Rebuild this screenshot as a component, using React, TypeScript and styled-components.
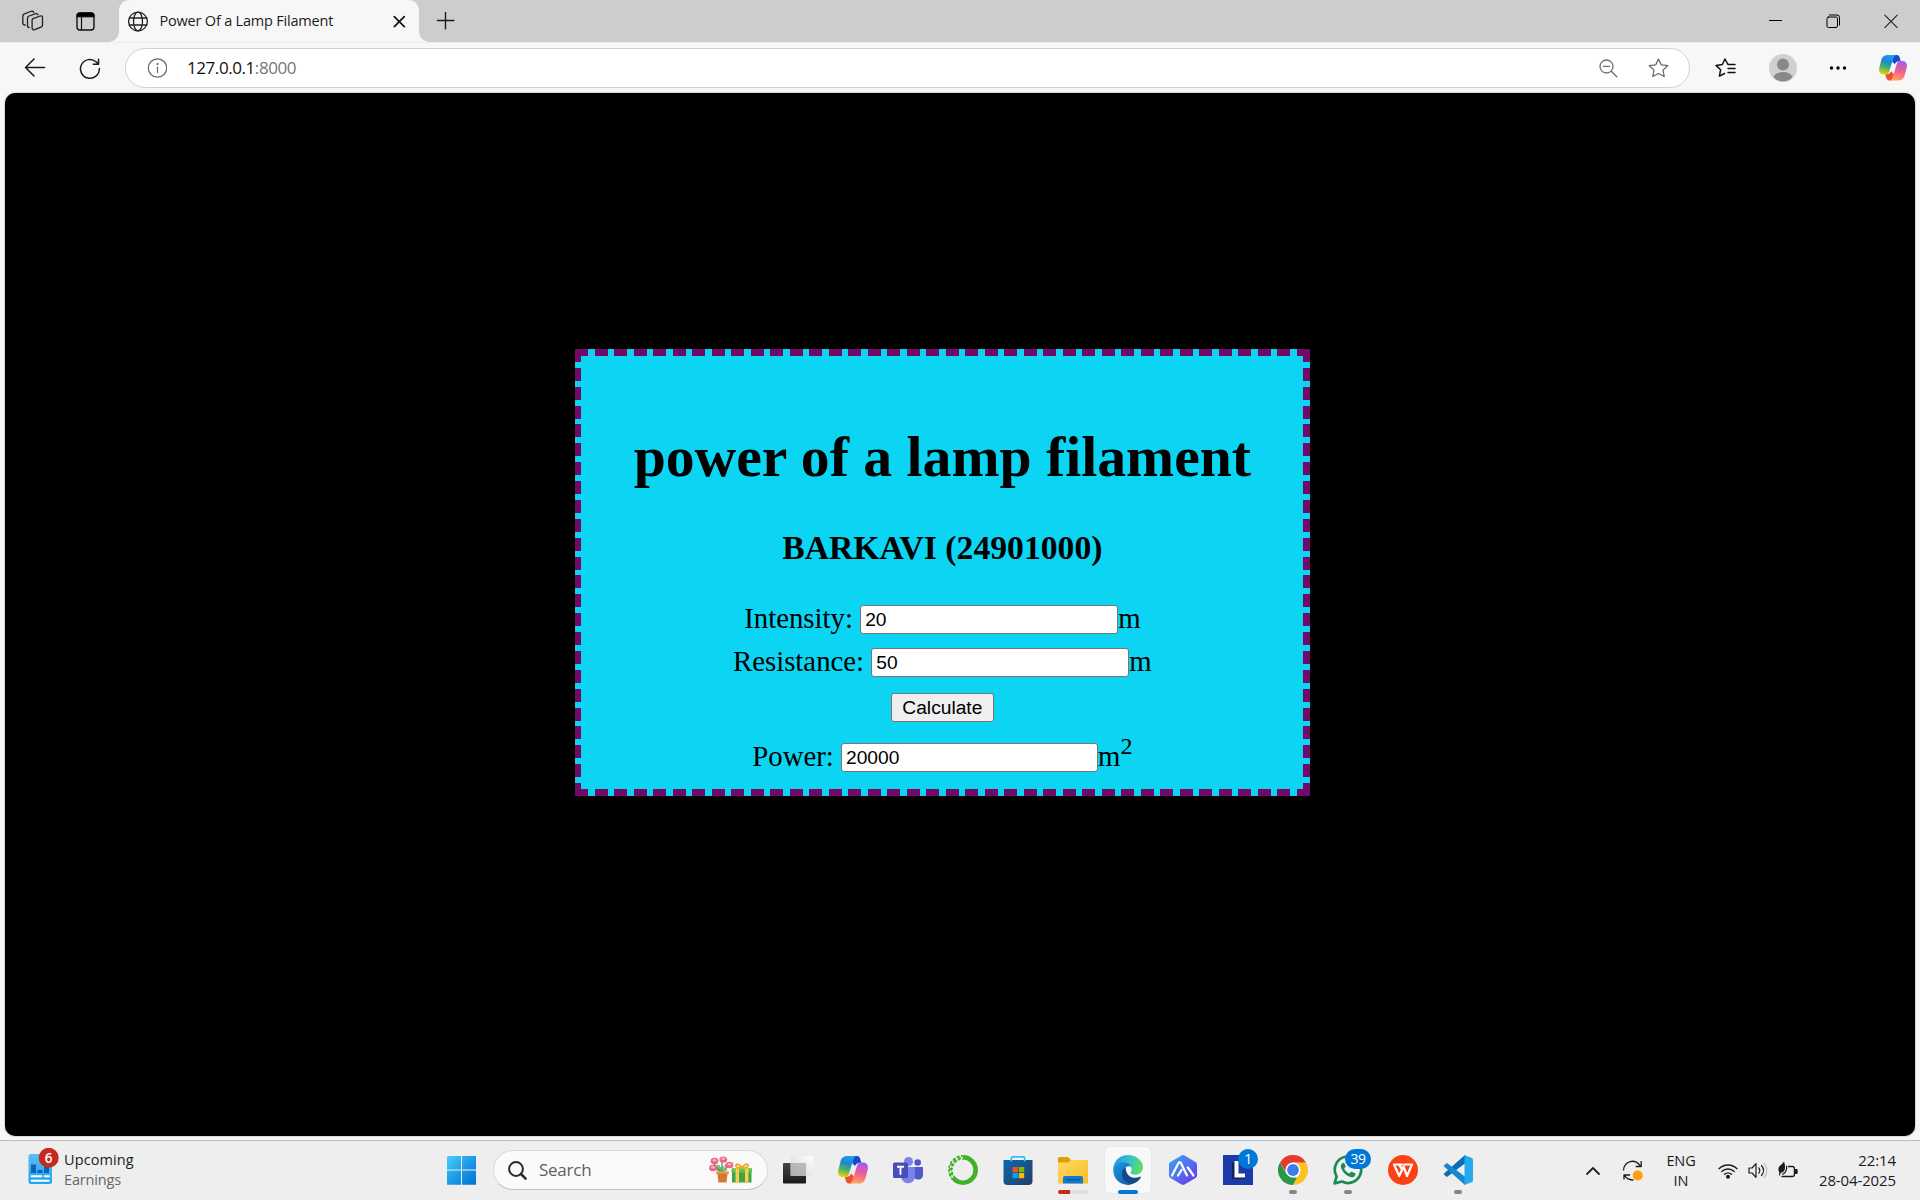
import React from "react";
import styled, { createGlobalStyle, css } from "styled-components";

const UI_FONT = '"Open Sans", "Noto Sans", sans-serif';

const GlobalStyle = createGlobalStyle`
  * { box-sizing: border-box; }
  html, body { margin: 0; padding: 0; }
  body { width: 1920px; height: 1200px; overflow: hidden; background: #f7f7f7; }
  svg { display: block; flex: none; }
`;

const Screen = styled.div`
  width: 1920px;
  height: 1200px;
  display: flex;
  flex-direction: column;
  background: #f7f7f7;
  font-family: ${UI_FONT};
`;

/* ---------- browser chrome ---------- */

const TabStrip = styled.header`
  height: 42px;
  flex: none;
  display: flex;
  align-items: stretch;
  background: #cdcdcd;
`;

const StripTools = styled.div`
  width: 119px;
  display: flex;
  align-items: center;
  padding: 0 0 0 22px;
  gap: 32px;
`;

const Tab = styled.div`
  position: relative;
  width: 300px;
  height: 42px;
  display: flex;
  align-items: center;
  padding: 0 12px 0 9px;
  background: #f7f7f7;
  border-radius: 10px 10px 0 0;
  &::before,
  &::after {
    content: "";
    position: absolute;
    bottom: 0;
    width: 10px;
    height: 10px;
  }
  &::before {
    left: -10px;
    background: radial-gradient(circle at 0 0, transparent 9.5px, #f7f7f7 10px);
  }
  &::after {
    right: -10px;
    background: radial-gradient(circle at 100% 0, transparent 9.5px, #f7f7f7 10px);
  }
`;

const TabTitle = styled.span`
  flex: 1;
  margin-left: 10.5px;
  font-size: 14.5px;
  letter-spacing: -0.2px;
  line-height: 20px;
  color: #1b1b1b;
  white-space: nowrap;
`;

const NewTab = styled.div`
  display: flex;
  align-items: center;
  padding-left: 18px;
`;

const WindowButtons = styled.div`
  margin-left: auto;
  display: flex;
`;

const WindowButton = styled.div`
  width: 58px;
  display: flex;
  align-items: center;
  justify-content: center;
`;

const Toolbar = styled.div`
  height: 51px;
  flex: none;
  display: flex;
  align-items: center;
  padding: 1px 0 0 24px;
  border-top: 1px solid #ececec;
  background: #f7f7f7;
`;

const NavButtons = styled.div`
  width: 101px;
  display: flex;
  gap: 33px;
`;

const AddressBar = styled.div`
  width: 1565px;
  height: 40px;
  margin-top: -1px;
  display: flex;
  align-items: center;
  padding: 0 20px 0 21px;
  border: 1px solid #d0d0d0;
  border-radius: 20px;
  background: #fff;
`;

const Url = styled.span`
  flex: 1;
  margin-left: 20px;
  font-size: 17px;
  line-height: 24px;
  letter-spacing: -0.43px;
  color: #111;
  span { color: #767676; }
`;

const BarIcons = styled.div`
  display: flex;
  align-items: center;
  gap: 30px;
`;

const ToolIcons = styled.div`
  display: flex;
  align-items: center;
  margin: -1px 0 0 25px;
  gap: 32px;
`;

/* ---------- page ---------- */

const Page = styled.main`
  height: 1043px;
  flex: none;
  margin: 0 5px;
  padding: 256px 0 0 570px;
  border-radius: 10px;
  background: #000;
  box-shadow: 0 0 2px rgba(0, 0, 0, 0.4);
`;

const dash = (dir: string, period: number) =>
  `repeating-linear-gradient(${dir}, #700a66 0 13px, transparent 13px ${period}px)`;

const Card = styled.section`
  width: 734.7px;
  height: 447px;
  display: flex;
  flex-direction: column;
  align-items: center;
  padding-top: 75px;
  font-family: "Liberation Serif", "Times New Roman", serif;
  font-size: 28.8px;
  color: #000;
  background:
    ${dash("to right", 19.505)} 0 0 / 100% 7px no-repeat,
    ${dash("to right", 19.505)} 0 100% / 100% 7px no-repeat,
    ${dash("to bottom", 18.87)} 0 0 / 6.3px 100% no-repeat,
    ${dash("to bottom", 18.87)} 100% 0 / 7px 100% no-repeat,
    #0bd5f2;
`;

const Title = styled.h1`
  margin: 0;
  font-size: 57.7px;
  line-height: 66px;
  white-space: nowrap;
`;

const Author = styled.h3`
  margin: 39px 0 34px;
  font-size: 33.7px;
  line-height: 38px;
`;

const Field = styled.label`
  height: 34px;
  display: flex;
  align-items: center;
  margin-bottom: 9px;
  line-height: 34px;
  white-space: pre;
`;

const ResultField = styled(Field)`
  margin: 17px 0 0;
`;

const control = css`
  font-family: "Liberation Sans", Arial, sans-serif;
  font-size: 19.2px;
  color: #000;
  border: 1px solid #767676;
  border-radius: 3px;
`;

const Input = styled.input<{ $w?: number }>`
  ${control}
  width: ${(p) => p.$w ?? 258}px;
  height: 29px;
  margin: 3px 0 0;
  padding: 2px 4px 1px;
  background: #fff;
  outline: none;
`;

const Calculate = styled.button`
  ${control}
  width: 102.5px;
  height: 29px;
  margin: 6px 0 0;
  padding: 1px 0 0;
  background: #efefef;
`;

const Sup = styled.sup`
  font-size: 24px;
  line-height: 24px;
  align-self: flex-start;
  margin-top: -5px;
`;

/* ---------- taskbar ---------- */

const Taskbar = styled.footer`
  height: 60px;
  margin-top: 4px;
  flex: none;
  display: flex;
  align-items: flex-start;
  border-top: 1px solid #bdbdbd;
  background: #eeeeee;
`;

const Launcher = styled.nav`
  height: 58px;
  display: flex;
  align-items: center;
`;

const Widget = styled.div`
  width: 447px;
  height: 59px;
  display: flex;
  padding: 7px 0 0 28px;
`;

const WidgetIcon = styled.div`
  width: 36px;
`;

const TwoLines = styled.div<{ $align?: string }>`
  font-size: 14.5px;
  line-height: 20px;
  letter-spacing: -0.1px;
  text-align: ${(p) => p.$align ?? "left"};
  color: #1c1c1c;
`;

const Muted = styled.div`
  color: #666;
  letter-spacing: -0.15px;
`;

const WidgetText = styled(TwoLines)`
  padding-top: 2px;
  letter-spacing: 0.1px;
`;

const SearchBox = styled.div`
  width: 275px;
  height: 40px;
  margin: 0 2px 0 16px;
  display: flex;
  align-items: center;
  padding: 0 14px;
  border: 1px solid #dadada;
  border-bottom-color: #c2c2c2;
  border-radius: 20px;
  background: #fafafa;
`;

const SearchText = styled.span`
  flex: 1;
  margin-left: 12px;
  font-size: 17px;
  letter-spacing: -0.25px;
  line-height: 24px;
  color: #5f5f5f;
`;

const AppSlot = styled.div`
  position: relative;
  width: 55px;
  height: 58px;
  display: flex;
  align-items: center;
  justify-content: center;
`;

const ActiveTile = styled.div`
  width: 48px;
  height: 48px;
  display: flex;
  align-items: center;
  justify-content: center;
  border: 1px solid #e5e5e5;
  border-radius: 6px;
  background: #f8f8f8;
`;

const Indicator = styled.i<{ $w: number; $color: string; $track?: boolean }>`
  position: absolute;
  bottom: 5px;
  left: 50%;
  width: ${(p) => p.$w}px;
  height: 4px;
  margin-left: ${(p) => -p.$w / 2}px;
  border-radius: 2px;
  background: ${(p) =>
    p.$track ? `linear-gradient(to right, ${p.$color} 12px, #dedede 12px)` : p.$color};
`;

const Badge = styled.b<{ $w: number }>`
  position: absolute;
  top: 8px;
  right: ${(p) => (p.$w > 22 ? 4 : 7)}px;
  width: ${(p) => p.$w}px;
  height: 20px;
  border-radius: 10px;
  background: #0078d7;
  color: #fff;
  font-size: 14px;
  font-weight: 400;
  line-height: 20px;
  letter-spacing: -0.5px;
  text-align: center;
`;

const Tray = styled.div`
  height: 59px;
  margin-left: auto;
  padding-right: 24px;
  display: flex;
  align-items: center;
`;

const TraySlot = styled.div<{ $w: number }>`
  width: ${(p) => p.$w}px;
  display: flex;
  justify-content: center;
`;

const Language = styled(TwoLines)`
  width: 56px;
  margin-right: 4px;
`;

const Clock = styled(TwoLines)`
  width: 93px;
  margin-top: -2px;
  font-size: 15px;
  letter-spacing: -0.12px;
`;

/* ---------- drawings ---------- */

const line = (w = 1.3, color = "#1b1b1b") => ({
  fill: "none",
  stroke: color,
  strokeWidth: w,
  strokeLinecap: "round" as const,
  strokeLinejoin: "round" as const,
});

const Workspaces = () => (
  <svg width="22" height="22" viewBox="0 0 22 22" {...line(1.3, "#222")}>
    <path d="M10.500 8.800l7.700-2.800c1.300-.4 2.300.2 2.300 1.500v7.600c0 1-.5 1.700-1.500 2.100l-6.300 2.500c-1.400.5-2.600-.1-2.600-1.600v-7.700c0-.8.100-1.300.4-1.600z" />
    <path d="M7.200 17.500c-1.100 0-1.700-.6-1.700-1.700V8.300c0-1.200.5-1.900 1.600-2.300l5.800-2.200c1.500-.5 2.600-.2 3.100.9" />
    <path d="M3.200 15C1.600 15 .8 14.300.8 13.100V6.200c0-1.200.5-1.900 1.600-2.300L8.500 1.500c1.400-.5 2.600-.3 3.200.7" />
  </svg>
);

const VerticalTabs = () => (
  <svg width="19" height="19" viewBox="0 0 19 19">
    <rect x="1" y="1" width="17" height="17" rx="3" {...line(1.4, "#111")} />
    <path d="M1 4.800V3.500Q1 1 3.500 1h12Q18 1 18 3.500v1.300z" fill="#000" stroke="#000" />
    <path d="M5.500 5v13" {...line(1.2, "#111")} />
  </svg>
);

const Globe = () => (
  <svg width="21" height="21" viewBox="0 0 21 21" {...line(1.3, "#222")}>
    <circle cx="10" cy="10.500" r="9.400" />
    <ellipse cx="10" cy="10.500" rx="4.500" ry="9.400" />
    <path d="M1.300 7h17.400M1.300 14h17.400" />
  </svg>
);

const Back = () => (
  <svg width="22" height="20" viewBox="0 0 22 20" {...line(1.5)}>
    <path d="M20.500 9.500H2M10 1L1.500 9.500 10 18" />
  </svg>
);

const Reload = () => (
  <svg width="22" height="22" viewBox="0 0 22 22" {...line(1.5)}>
    <path d="M20.300 10.500A9.400 9.400 0 1 1 17.300 4l2 1.900M19.500 1.200v5h-5.200" />
  </svg>
);

const Info = () => (
  <svg width="20" height="20" viewBox="0 0 20 20" {...line(1.2, "#666")}>
    <circle cx="10.500" cy="10" r="9.200" />
    <path d="M10.500 9.200v5.300" />
    <circle cx="10.500" cy="6.100" r=".5" fill="#666" />
  </svg>
);

const STAR =
  "M10 1l2.700 5.700 6.300.8-4.600 4.300 1.200 6.300L10 15.100l-5.600 3 1.200-6.300L1 7.500l6.300-.8z";

const ZoomOut = () => (
  <svg width="19" height="19" viewBox="0 0 19 19" {...line(1.3, "#707070")}>
    <circle cx="7.500" cy="7.500" r="6.500" />
    <path d="M4.300 7.300h6.400M12.300 12.300l5.500 5.500" />
  </svg>
);

const Star = () => (
  <svg width="21" height="20" viewBox="0 0 20 19.500" {...line(1.2, "#666")}>
    <path d={STAR} />
  </svg>
);

const Favorites = () => (
  <svg width="22" height="20" viewBox="0 0 22 20" {...line(1.5, "#111")}>
    <path d="M13.500 6.400L12.700 6 10 1 7.300 6.500l-6.300.9 4.600 4.400-1.200 6.300L9.600 15.500M13 6.400h7M13 10.500h7M13 14.500h7" />
  </svg>
);

const Profile = () => (
  <svg width="28" height="28" viewBox="0 0 28 28">
    <circle cx="14" cy="14" r="14" fill="#d2d0ce" />
    <circle cx="14" cy="10.500" r="6" fill="#8a8886" />
    <path d="M4.500 23c1.600-3.400 5.200-5 9.500-5s7.900 1.600 9.500 5c-2.500 3-6 4.600-9.500 4.600S7 26 4.500 23z" fill="#8a8886" />
  </svg>
);

const More = () => (
  <svg width="18" height="4" viewBox="0 0 18 4">
    <circle cx="2.500" cy="2" r="1.700" />
    <circle cx="9" cy="2" r="1.700" />
    <circle cx="15.500" cy="2" r="1.700" />
  </svg>
);

const LEAF =
  "M9.500 1h9c-1.700.6-2.600 2-3.200 3.700L11 18.600c-.7 2.300-2 3.400-4.200 3.400H5.200C1.200 22-.7 19 .3 14.900l2.200-8.400C3.600 2.500 5.800 1 9.500 1z";

const Copilot = ({ id, size }: { id: string; size: number }) => (
  <svg width={size} height={size} viewBox="0 0 30 30">
    <defs>
      <linearGradient id={`${id}-cool`} x1=".6" y1="0" x2=".35" y2="1">
        <stop offset="0" stopColor="#18a3ee" />
        <stop offset=".35" stopColor="#1f84d6" />
        <stop offset=".65" stopColor="#45b36a" />
        <stop offset="1" stopColor="#efcf00" />
      </linearGradient>
      <linearGradient id={`${id}-warm`} x1=".35" y1="1" x2=".6" y2="0">
        <stop offset="0" stopColor="#a45bf0" />
        <stop offset=".5" stopColor="#ee5c94" />
        <stop offset="1" stopColor="#ffa45c" />
      </linearGradient>
    </defs>
    <path d="M16 1h3c2 0 2.800 1.400 3.300 3.200l1 3.600-1.500-.1c-2.500 0-4 1.300-4.800 3.300L14 8z" fill="#1749cf" />
    <path d="M14 28.400h-3c-2 0-2.800-1.400-3.300-3.200l-1-3.600 1.500.1c2.500 0 4-1.300 4.800-3.300l3 3z" fill="#f0502f" />
    <path d={LEAF} fill={`url(#${id}-cool)`} />
    <path d={LEAF} transform="rotate(180 15 14.700)" fill={`url(#${id}-warm)`} />
  </svg>
);

const News = () => (
  <svg width="34" height="40" viewBox="0 0 34 40">
    <defs>
      <linearGradient id="news" x1="0" y1="0" x2="0" y2="1">
        <stop offset="0" stopColor="#5bbcf5" />
        <stop offset="1" stopColor="#1fa6ea" />
      </linearGradient>
    </defs>
    <rect x=".5" y="6" width="23.500" height="30" rx="2.500" fill="url(#news)" />
    <path d="M3 16.500h5V25H3zM9.500 22h5v3h-5zM16 19h5v6h-5z" fill="#0b62b8" />
    <path d="M3.500 28.300h10M17 28.300h4M3.500 32.700h17.300" stroke="#fff" strokeWidth="2" strokeLinecap="round" />
    <circle cx="20.700" cy="9.800" r="10" fill="#c42b1c" />
    <text x="20.500" y="14.800" textAnchor="middle" fontSize="13.500" fontWeight="600" fill="#fff">6</text>
  </svg>
);

const Windows = () => (
  <svg width="30" height="30" viewBox="0 0 30 30">
    <defs>
      <linearGradient id="win" gradientUnits="userSpaceOnUse" x1="0" y1="0" x2="30" y2="30">
        <stop offset="0" stopColor="#4fd0ff" />
        <stop offset=".5" stopColor="#1c9be8" />
        <stop offset="1" stopColor="#0070d0" />
      </linearGradient>
    </defs>
    <path d="M1 1H14v13.500H0V2zM15 1h14v13.500H15zM0 15.500h14v14.300H0zM15 15.500h14v14.300H15z" fill="url(#win)" />
  </svg>
);

const Magnifier = () => (
  <svg width="19" height="19" viewBox="0 0 19 19" {...line(2, "#2a2a2a")}>
    <circle cx="8" cy="8" r="6.900" />
    <path d="M13 13l4.600 4.600" strokeWidth="2.500" />
  </svg>
);

const Flower = ({ x, y }: { x: number; y: number }) => (
  <g>
    <ellipse cx={x} cy={y} rx="3.900" ry="3.200" fill="#ef6489" />
    <ellipse cx={x} cy={y - 0.8} rx="2.100" ry="1.300" fill="#fbb0c2" />
  </g>
);

const Gifts = () => (
  <svg width="44" height="28" viewBox="0 0 44 28">
    <path d="M13 16V6M12.500 16L5 8M13.500 16l7-8M12 16l-6-4" stroke="#3c9a48" strokeWidth="1.200" fill="none" />
    <path d="M7.500 8.500l3 .5 1.500 6zM18.500 7l-3 2-1.500 6zM9.500 13.500l3-3.500 4 1 2 2.500-4 2z" fill="#62b56c" />
    <Flower x={5.5} y={5} />
    <Flower x={14.3} y={3.600} />
    <Flower x={4.000} y={12} />
    <Flower x={20.500} y={9} />
    <path d="M7.500 15.500h12V18h-1l-1 8.500h-8L8.500 18h-1z" fill="#d9782a" />
    <path d="M7 15.500h12.500v2H7z" fill="#ee9b52" />
    <path d="M23 12.500h19.500v14H23z" fill="#3fa348" />
    <path d="M22.500 12.500H43v4H22.500z" fill="#5cc254" />
    <path d="M26.500 12.500H30v14h-3.500zM36 12.500h3.500v14H36z" fill="#f8cf45" />
    <path d="M33 12c-2-4-6-5-6-2.500 0 2 3 2.500 6 2.500zm0 0c2-4 6-5 6-2.500 0 2-3 2.500-6 2.500z" fill="none" stroke="#e9ab22" strokeWidth="1.900" />
  </svg>
);

const TaskView = () => (
  <svg width="30" height="30" viewBox="0 0 30 30">
    <defs>
      <linearGradient id="tvd" x1="0" y1="0" x2="0" y2="1">
        <stop offset="0" stopColor="#454545" />
        <stop offset="1" stopColor="#191919" />
      </linearGradient>
      <linearGradient id="tvl" x1="1" y1="0" x2="0" y2="1">
        <stop offset="0" stopColor="#fff" />
        <stop offset="1" stopColor="#d2d2d2" />
      </linearGradient>
    </defs>
    <rect x="0" y="8" width="23" height="20.500" rx="1" fill="url(#tvd)" />
    <rect x="7.500" y="1" width="22.500" height="20" rx="1" fill="url(#tvl)" />
    <path d="M7.500 8H23v13H7.500z" fill="#9a9a9a" opacity=".6" />
  </svg>
);

const Teams = () => (
  <svg width="30" height="30" viewBox="0 0 30 30">
    <circle cx="24.700" cy="7.500" r="3.300" fill="#5059c9" />
    <path d="M19 12h11v7.500c0 3.500-2 5-4.500 5S19 23 19 20z" fill="#5059c9" />
    <circle cx="15.500" cy="6.500" r="4.500" fill="#7b83eb" />
    <path d="M8 12h14v8.500c0 5-3 7.700-7 7.700s-7-3-7-7.700z" fill="#7b83eb" />
    <rect x="0" y="7.500" width="15" height="15.500" rx="1.500" fill="#464eb8" />
    <path d="M4 11.800h7M7.500 11.800v8" stroke="#fff" strokeWidth="1.900" fill="none" />
  </svg>
);

const Anaconda = () => (
  <svg width="30" height="30" viewBox="0 0 30 30" fill="none">
    <circle cx="15" cy="15" r="12.700" stroke="#43b02a" strokeWidth="4.600" />
    <path d="M15 2.500A12.500 12.500 0 0 0 6 23.800" stroke="#eee" strokeWidth="1.600" strokeDasharray="2.500 2.500" />
    <path d="M13 .8A14.300 14.300 0 0 0 4.800 25.500" stroke="#eee" strokeWidth="1.700" strokeDasharray="1.800 2.800" />
    <path d="M14 4.300A10.800 10.800 0 0 0 6.500 21.500" stroke="#eee" strokeWidth="1.500" strokeDasharray="1.500 2.500" />
  </svg>
);

const Store = () => (
  <svg width="30" height="30" viewBox="0 0 30 30">
    <defs>
      <linearGradient id="store" x1="0" y1="0" x2="1" y2="1">
        <stop offset="0" stopColor="#0e68b0" />
        <stop offset="1" stopColor="#243d66" />
      </linearGradient>
    </defs>
    <path d="M.5 5h29v21q0 4-4 4h-21q-4 0-4-4z" fill="url(#store)" />
    <path d="M8.300 6.500V3.500Q8.300 1.900 9.800 1.900h10.400Q21.700 1.900 21.700 3.500v3" fill="none" stroke="#2cc3f2" strokeWidth="1.700" />
    <path d="M9.500 12H15v5.300H9.500z" fill="#f25022" />
    <path d="M15.800 12h5.400v5.300h-5.400z" fill="#7fba00" />
    <path d="M9.500 18H15v5.300H9.500z" fill="#00a4ef" />
    <path d="M15.800 18h5.400v5.300h-5.400z" fill="#ffb900" />
  </svg>
);

const Explorer = () => (
  <svg width="30" height="30" viewBox="0 0 30 30">
    <defs>
      <linearGradient id="folder" x1="0" y1="0" x2="1" y2="1">
        <stop offset="0" stopColor="#ffd966" />
        <stop offset="1" stopColor="#fcbc22" />
      </linearGradient>
    </defs>
    <path d="M0 3.500Q0 2 1.500 2H10l3 3v4H0z" fill="#dd9f08" />
    <path d="M0 7.500h10L13 5h17v23.500H0z" fill="url(#folder)" />
    <path d="M5 28.500V23q0-2 2-2h16q2 0 2 2v5.500z" fill="#0f7ad1" />
    <path d="M8.500 24.700h13" stroke="#0a4f93" strokeWidth="1.300" />
  </svg>
);

const Edge = () => (
  <svg width="30" height="30" viewBox="0 0 30 30">
    <defs>
      <linearGradient id="eg1" x1="0" y1=".3" x2="1" y2=".5">
        <stop offset="0" stopColor="#2497e0" />
        <stop offset=".5" stopColor="#32c1d6" />
        <stop offset="1" stopColor="#62e05a" />
      </linearGradient>
      <linearGradient id="eg2" x1="0" y1="0" x2="1" y2="1">
        <stop offset="0" stopColor="#1c96de" />
        <stop offset="1" stopColor="#0f5ca8" />
      </linearGradient>
    </defs>
    <path d="M.3 13.500C1 5.500 7 0 15 0s15 5.600 15 12.300c0 4.500-3.400 7.400-7.700 7.400-3.300 0-4.800-1.200-4.800-2.200 0-.8 1.100-1.200 1.100-3.300 0-2.600-3-5.700-7.600-5.700C6 8.500 2.500 10.300.3 13.500z" fill="url(#eg1)" />
    <path d="M.3 13.500C2.500 8.700 7 7.500 10.700 7.600c3.600.1 6.500 1.600 7.500 4-4.200-1.400-7.400 1.300-7.700 5-.4 5.500 4.600 11.200 11.700 10.400C20 29 17.600 30 15 30 6.500 30-.6 23 .3 13.500z" fill="url(#eg2)" />
    <path d="M12.700 12.300c-4 2.500-4.700 6-3.200 10 2 5 7.500 8.200 12.300 5.800 2.600-1.200 4.700-3.100 6-5.500.5-.9-.2-1.200-1-.8-6.400 3-14.300-.7-14.100-9.500z" fill="#114a8b" />
  </svg>
);

const Hexagon = () => (
  <svg width="30" height="30" viewBox="0 0 30 30">
    <defs>
      <linearGradient id="hex" x1="0" y1="0" x2="1" y2="1">
        <stop offset="0" stopColor="#38a8f2" />
        <stop offset=".5" stopColor="#5270ee" />
        <stop offset="1" stopColor="#6f2cf0" />
      </linearGradient>
    </defs>
    <path d="M13.500.5q1.500-.8 3 0L27.500 7q1.500.9 1.500 2.500v11q0 1.600-1.500 2.500l-11 6.500q-1.500.8-3 0L2.500 23Q1 22.100 1 20.500v-11Q1 7.900 2.500 7z" fill="url(#hex)" />
    <path d="M4 20.500L10.500 8q1.200-2 2.400 0L19 20.500M10 20.500l3.500-5.500M19.800 12.500l5.700 8" {...line(2.2, "#fff")} />
  </svg>
);

const LetterL = () => (
  <svg width="30" height="30" viewBox="0 0 30 30">
    <path d="M0 0h30v30H0z" fill="#1d3aa9" />
    <path d="M9 8l4-2v15l9 1v2H9z" fill="#0e2467" />
    <path d="M13.500 6v14.500H22" fill="none" stroke="#fff" strokeWidth="4" />
  </svg>
);

const Chrome = () => (
  <svg width="30" height="30" viewBox="0 0 30 30">
    <path d="M15 7.500h13A15 15 0 0 1 15 30l6.500-11.200z" fill="#fcc31e" />
    <path d="M2 7.500l6.500 11.300L15 22.500h4L15 30A15 15 0 0 1 2 7.500z" fill="#279847" />
    <path d="M2 7.500A15 15 0 0 1 28 7.500H15L8 12v5z" fill="#e33b2e" />
    <circle cx="15" cy="15" r="7.500" fill="#fff" />
    <circle cx="15" cy="15" r="5.900" fill="#3b7ded" />
  </svg>
);

const WhatsApp = () => (
  <svg width="30" height="30" viewBox="0 0 30 30">
    <path d="M1.600 28.400l2-7A13.200 13.200 0 1 1 9 26.500z" fill="#f2f2f2" stroke="#1e8a53" strokeWidth="2.700" strokeLinejoin="round" />
    <path d="M10 7.800c-2 .9-2.800 3-1.800 5.500 1.800 4.700 5.300 7.700 10 8.900 2.500.6 4.500-1.200 4.300-3.600l-4-2-2 2c-2.500-1-4.300-2.900-5.300-5.200l1.500-1.900-1.500-3.600z" fill="#1e8a53" />
  </svg>
);

const Wps = () => (
  <svg width="30" height="30" viewBox="0 0 30 30">
    <circle cx="15" cy="15" r="15" fill="#fb4214" />
    <path d="M6 9.500h8M6 9.500l5.200 11.500 4.300-9.500 3.500 9.500 5-11.500h-7.500M11 9.500l3 5" {...line(2.2, "#fff")} />
  </svg>
);

const VsCode = () => (
  <svg width="30" height="30" viewBox="0 0 30 30">
    <path d="M22 0L.5 19l2.600 2.500q.8.500 1.600 0L22.500 8z" fill="#0a6db3" />
    <path d="M22 30L.5 11l2.600-2.500q.8-.5 1.600 0L22.500 22z" fill="#1688ce" />
    <path d="M21.500 0l7.500 3q1 .5 1 1.500v21q0 1-1 1.500l-7.500 3z" fill="#25a9f0" />
  </svg>
);

const Chevron = () => (
  <svg width="16" height="10" viewBox="0 0 16 10" {...line(1.8, "#222")}>
    <path d="M2 8l6-6 6 6" />
  </svg>
);

const Sync = () => (
  <svg width="22" height="22" viewBox="0 0 22 22">
    <g {...line(1.3)} strokeLinecap="butt">
      <path d="M1.500 10.500A8.900 8.900 0 0 1 18.500 6.500M19.200 1v5.500h-5.500M2 19.500v-4.500h6M2.500 15.300C4.500 18.500 7 20 11.500 20" />
    </g>
    <circle cx="15.800" cy="15.500" r="5" fill="#ff9d0a" />
  </svg>
);

const Wifi = () => (
  <svg width="20" height="16" viewBox="0 0 20 16" {...line(1.4)}>
    <path d="M1 5.700a12.700 12.700 0 0 1 18 0M3.800 8.600a8.700 8.700 0 0 1 12.400 0M6.600 11.300a4.800 4.800 0 0 1 6.800 0" />
    <circle cx="10" cy="13.800" r="1.300" fill="#1b1b1b" />
  </svg>
);

const Speaker = () => (
  <svg width="20" height="17" viewBox="0 0 20 17" {...line(1.2)}>
    <path d="M1 6h3l4-4.300v13.600L4 11H1zM10.800 5.800c1.200 1.600 1.200 3.800 0 5.400M13.500 3.500c2.500 3 2.500 7 0 10" />
    <path d="M16 1.300c3.800 4.200 3.800 10.200 0 14.400" stroke="#bcbcbc" />
  </svg>
);

const Battery = () => (
  <svg width="22" height="20" viewBox="0 0 22 20">
    <path d="M11.500 5.500h3.700q2.200 0 2.200 2v6q0 2-2.200 2H5" {...line(1.3)} />
    <path d="M17.800 8h1.700q1.200 0 1.200 1v3q0 1-1.200 1h-1.700z" fill="#1b1b1b" />
    <path d="M7 .6c.8 2 1.300 5.200.8 7.600-.3 1.700-1.500 3-3.500 3.400L2 15.500l.3-4.200C.8 9.500 1.200 6.500 3 4.800 4.500 3.500 6 2.500 7 .6z" fill="#1b1b1b" />
    <path d="M9.600 5.200c.4 3.500-.6 6.300-4 8" {...line(1.2)} />
  </svg>
);

/* ---------- view ---------- */

type App = {
  name: string;
  icon: React.ReactNode;
  badge?: { text: string; width: number };
  bar?: { w: number; color: string; track?: boolean };
  active?: boolean;
};

const GREY_BAR = { w: 8, color: "#858585" };

const apps: App[] = [
  { name: "task-view", icon: <TaskView /> },
  { name: "copilot", icon: <Copilot id="task" size={30} /> },
  { name: "teams", icon: <Teams /> },
  { name: "anaconda", icon: <Anaconda /> },
  { name: "store", icon: <Store /> },
  { name: "explorer", icon: <Explorer />, bar: { w: 30, color: "#c42b1c", track: true } },
  { name: "edge", icon: <Edge />, bar: { w: 20, color: "#0078d4" }, active: true },
  { name: "hexagon", icon: <Hexagon /> },
  { name: "l-app", icon: <LetterL />, badge: { text: "1", width: 20 } },
  { name: "chrome", icon: <Chrome />, bar: GREY_BAR },
  { name: "whatsapp", icon: <WhatsApp />, badge: { text: "39", width: 26 }, bar: GREY_BAR },
  { name: "wps", icon: <Wps /> },
  { name: "vscode", icon: <VsCode />, bar: GREY_BAR },
];

export default function App() {
  return (
    <Screen>
      <GlobalStyle />
      <TabStrip>
        <StripTools>
          <Workspaces />
          <VerticalTabs />
        </StripTools>
        <Tab>
          <Globe />
          <TabTitle>Power Of a Lamp Filament</TabTitle>
          <svg width="15" height="13" viewBox="0 0 15 13" {...line(1.7, "#111")}>
            <path d="M2.300 1.700l10 10M12.300 1.700l-10 10" />
          </svg>
        </Tab>
        <NewTab>
          <svg width="18" height="18" viewBox="0 0 18 18" {...line(1.4)}>
            <path d="M8.500.3v16.600M.3 8.500h16.600" />
          </svg>
        </NewTab>
        <WindowButtons>
          <WindowButton>
            <svg width="14" height="3" viewBox="0 0 14 3">
              <path d="M1 .5h13" stroke="#000" />
            </svg>
          </WindowButton>
          <WindowButton>
            <svg width="14" height="14" viewBox="0 0 14 14" {...line(1, "#000")}>
              <rect x="1" y="3" width="10.500" height="10.500" rx="1.500" />
              <path d="M3.500 1H11q2.500 0 2.500 2.500v7.500" />
            </svg>
          </WindowButton>
          <WindowButton>
            <svg width="14" height="14" viewBox="0 0 14 14" {...line(1.1, "#222")}>
              <path d="M.8 1.200l12.400 12.400M13.200 1.200L.8 13.600" />
            </svg>
          </WindowButton>
        </WindowButtons>
      </TabStrip>

      <Toolbar>
        <NavButtons>
          <Back />
          <Reload />
        </NavButtons>
        <AddressBar>
          <Info />
          <Url>
            127.0.0.1<span>:8000</span>
          </Url>
          <BarIcons>
            <ZoomOut />
            <Star />
          </BarIcons>
        </AddressBar>
        <ToolIcons>
          <Favorites />
          <Profile />
          <More />
          <Copilot id="side" size={28} />
        </ToolIcons>
      </Toolbar>

      <Page>
        <Card>
          <Title>power of a lamp filament</Title>
          <Author>BARKAVI (24901000)</Author>
          <Field>
            {"Intensity: "}
            <Input defaultValue="20" />m
          </Field>
          <Field>
            {"Resistance: "}
            <Input defaultValue="50" />m
          </Field>
          <Calculate type="button">Calculate</Calculate>
          <ResultField>
            {"Power: "}
            <Input defaultValue="20000" $w={257} />m<Sup>2</Sup>
          </ResultField>
        </Card>
      </Page>

      <Taskbar>
        <Widget>
          <WidgetIcon>
            <News />
          </WidgetIcon>
          <WidgetText>
            Upcoming
            <Muted>Earnings</Muted>
          </WidgetText>
        </Widget>
        <Launcher>
          <Windows />
          <SearchBox>
            <Magnifier />
            <SearchText>Search</SearchText>
            <Gifts />
          </SearchBox>
          {apps.map((app) => (
            <AppSlot key={app.name}>
              {app.active ? <ActiveTile>{app.icon}</ActiveTile> : app.icon}
              {app.badge && <Badge $w={app.badge.width}>{app.badge.text}</Badge>}
              {app.bar && (
                <Indicator $w={app.bar.w} $color={app.bar.color} $track={app.bar.track} />
              )}
            </AppSlot>
          ))}
        </Launcher>
        <Tray>
          <TraySlot $w={40}><Chevron /></TraySlot>
          <TraySlot $w={40}><Sync /></TraySlot>
          <Language $align="center">
            ENG
            <br />
            IN
          </Language>
          <TraySlot $w={30}><Wifi /></TraySlot>
          <TraySlot $w={30}><Speaker /></TraySlot>
          <TraySlot $w={30}><Battery /></TraySlot>
          <Clock $align="right">
            22:14
            <br />
            28-04-2025
          </Clock>
        </Tray>
      </Taskbar>
    </Screen>
  );
}
